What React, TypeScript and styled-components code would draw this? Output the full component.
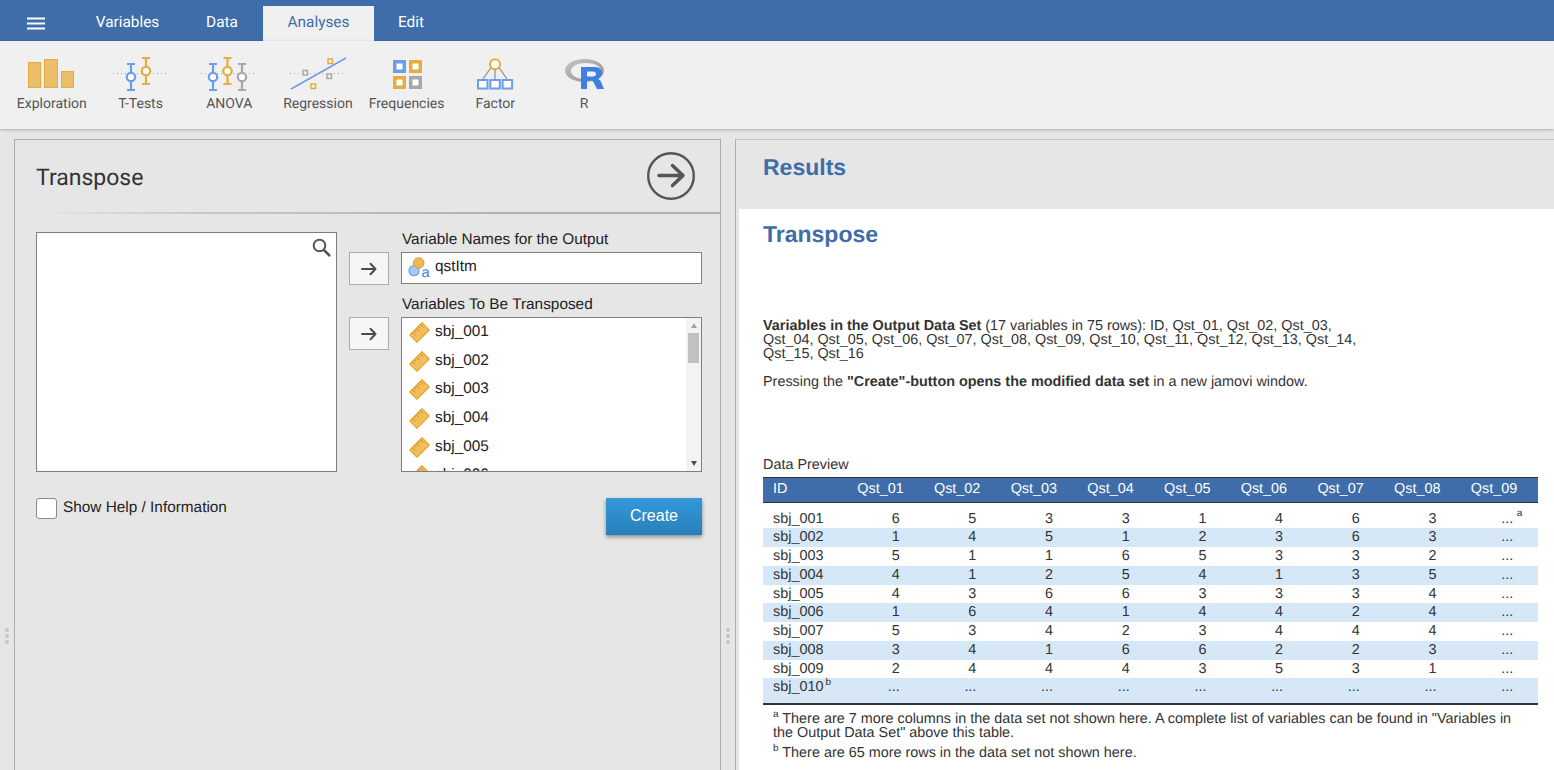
import React from "react";
import styled, { createGlobalStyle } from "styled-components";

const GlobalStyle = createGlobalStyle`
  html, body { margin: 0; padding: 0; height: 100%; overflow: hidden; background: #e6e6e6; }
  * { box-sizing: border-box; }
`;

const blue = "#3e6da9";
const iconBlue = "#6b9de8";
const iconOrange = "#e6ac40";
const iconGrey = "#a8a8a8";

// data
const tabs = ["Variables", "Data", "Analyses", "Edit"];
const variables = ["sbj_001", "sbj_002", "sbj_003", "sbj_004", "sbj_005", "sbj_006"];
const columns = ["Qst_01", "Qst_02", "Qst_03", "Qst_04", "Qst_05", "Qst_06", "Qst_07", "Qst_08", "Qst_09"];
const rows: [string, string][] = [
  ["sbj_001", "65331463"],
  ["sbj_002", "14512363"],
  ["sbj_003", "51165332"],
  ["sbj_004", "41254135"],
  ["sbj_005", "43663334"],
  ["sbj_006", "16414424"],
  ["sbj_007", "53423444"],
  ["sbj_008", "34166223"],
  ["sbj_009", "24443531"],
];

const Page = styled.div`
  height: 100vh;
  display: flex;
  flex-direction: column;
  overflow: hidden;
  background: #e6e6e6;
  font-family: "Liberation Sans", Arial, sans-serif;
  text-rendering: geometricPrecision;
`;

// top tabs
const TopBar = styled.div`
  height: 41px;
  flex: none;
  background: ${blue};
  display: flex;
  align-items: flex-end;
`;
const MenuButton = styled.div`
  width: 74px;
  height: 100%;
  padding: 5px 2px 0 0;
  display: flex;
  align-items: center;
  justify-content: center;
`;
const Tab = styled.div<{ $active?: boolean; $width: number }>`
  width: ${(p) => p.$width}px;
  height: 35px;
  display: flex;
  align-items: center;
  justify-content: center;
  padding-bottom: 3px;
  font: 15.36px Roboto, sans-serif;
  color: ${(p) => (p.$active ? blue : "#fff")};
  background: ${(p) => (p.$active ? "#f0f0f0" : "transparent")};
`;

// ribbon
const Ribbon = styled.div`
  height: 88px;
  flex: none;
  background: #f0f0f0;
  display: flex;
  padding-left: 7.5px;
  box-shadow: 0 1px 3px rgba(0, 0, 0, 0.25);
  position: relative;
  z-index: 1;
`;
const RibbonButton = styled.div`
  width: 88.7px;
  display: flex;
  flex-direction: column;
  align-items: center;
  padding-top: 15px;
`;
const RibbonIcon = styled.svg`
  width: 60px;
  height: 38px;
  display: block;
`;
const RibbonLabel = styled.div`
  margin-top: 2px;
  font: 14px Roboto, sans-serif;
  color: #555;
  white-space: nowrap;
`;

const Main = styled.div`
  flex: 1;
  min-height: 0;
  display: flex;
  padding: 10px 0 0 14px;
  position: relative;
`;

// options panel
const OptionsPanel = styled.section`
  width: 707px;
  flex: none;
  border: 1px solid #acacac;
  border-bottom: 0;
`;
const PanelHeader = styled.header`
  height: 74px;
  display: flex;
  align-items: center;
  justify-content: space-between;
  padding: 0 25px 0 21px;
  border-bottom: 2px solid #b4b4b4;
  border-image: linear-gradient(to right, #e6e6e6 3%, #c9c9c9 25%, #b0b0b0 70%) 1;
`;
const PanelTitle = styled.h1`
  margin: 0;
  padding-top: 2px;
  font: 400 23px Roboto, sans-serif;
  color: #333;
`;
const FormGrid = styled.div`
  display: grid;
  grid-template-columns: 301px 301px;
  column-gap: 64px;
  padding: 18px 18px 0 21px;
`;
const SupplierBox = styled.div`
  height: 240px;
  background: #fff;
  border: 1px solid #7f7f7f;
  display: flex;
  justify-content: flex-end;
  padding: 5px 5px 0 0;
`;
const TargetColumn = styled.div`
  display: flex;
  flex-direction: column;
  position: relative;
`;
const Label = styled.div`
  height: 20px;
  font-size: 15.36px;
  line-height: 16px;
  color: #222;
  padding-left: 1px;
`;
const TargetRow = styled.div`
  position: relative;
`;
const TransferButton = styled.div`
  position: absolute;
  left: -52px;
  top: 0;
  width: 40px;
  height: 33px;
  background: #f6f6f6;
  border: 1px solid #acacac;
  display: flex;
  align-items: center;
  justify-content: center;
`;
const SingleInput = styled.div`
  height: 32px;
  margin-bottom: 13px;
  background: #fff;
  border: 1px solid #7f7f7f;
  display: flex;
  align-items: center;
  padding: 0 0 2px 6px;
  gap: 5px;
  font-size: 15.36px;
  color: #222;
`;
const ListBox = styled.div`
  height: 155px;
  background: #fff;
  border: 1px solid #7f7f7f;
  display: flex;
  overflow: hidden;
`;
const ListItems = styled.div`
  flex: 1;
  min-width: 0;
  padding-left: 6.5px;
`;
const ListItem = styled.div`
  height: 28.7px;
  display: flex;
  align-items: center;
  gap: 5.5px;
  font-size: 15.36px;
  color: #222;
  padding-bottom: 1px;
`;
const FakeScrollbar = styled.div`
  width: 15px;
  flex: none;
  background: #f3f3f3;
  display: flex;
  flex-direction: column;
  align-items: center;
  padding-top: 5px;
`;
const ScrollThumb = styled.div`
  width: 11px;
  height: 30px;
  margin-top: 5px;
  background: #c1c1c1;
`;
const ScrollUp = styled.div`
  width: 0;
  height: 0;
  border: 3.5px solid transparent;
  border-top: 0;
  border-bottom: 5px solid #a3a3a3;
`;
const ScrollDown = styled.div`
  width: 0;
  height: 0;
  margin-top: auto;
  margin-bottom: 5px;
  border: 3.5px solid transparent;
  border-bottom: 0;
  border-top: 5px solid #505050;
`;
const FormFooter = styled.div`
  display: flex;
  justify-content: space-between;
  align-items: flex-start;
  padding: 26px 18px 0 21px;
`;
const CheckRow = styled.label`
  display: flex;
  align-items: flex-start;
  gap: 6px;
  font-size: 15.36px;
  line-height: 20px;
  color: #222;
`;
const CheckBox = styled.span`
  width: 21px;
  height: 21px;
  background: #fff;
  border: 1px solid #8b8b8b;
  border-radius: 3px;
`;
const CreateButton = styled.button`
  width: 96px;
  height: 37px;
  margin: 0;
  padding: 0 0 2px;
  border: 0;
  color: #fff;
  font: 16px "Liberation Sans", Arial, sans-serif;
  background: linear-gradient(#3498db, #2980b9);
  box-shadow: 0 2px 4px rgba(0, 0, 0, 0.4);
`;

const DragDots = styled.div<{ $left: number }>`
  position: absolute;
  left: ${(p) => p.$left}px;
  top: 499px;
  display: flex;
  flex-direction: column;
  gap: 2px;
  i {
    width: 4px;
    height: 4px;
    border-radius: 50%;
    background: #c4c4c4;
  }
`;

// results panel
const ResultsPanel = styled.section`
  flex: 1;
  min-width: 0;
  margin-left: 14px;
  border-left: 1px solid #acacac;
  border-top: 1px solid #c8c8c8;
  display: flex;
  flex-direction: column;
`;
const ResultsHeader = styled.div`
  height: 69px;
  flex: none;
  padding: 14px 0 0 27px;
  font-size: 23px;
  line-height: 27px;
  font-weight: 700;
  color: ${blue};
`;
const ResultsBody = styled.div`
  flex: 1;
  margin-left: 3px;
  background: #fff;
  padding: 12px 16px 0 24px;
  color: #333;
  font-size: 14.4px;
  overflow: hidden;
`;
const ResultTitle = styled.h2`
  margin: 0;
  font-size: 23px;
  line-height: 27px;
  font-weight: 700;
  color: ${blue};
`;
const Note = styled.p`
  margin: 0 0 14px;
  width: 600px;
  line-height: 14px;
  &:first-of-type {
    margin-top: 71px;
  }
`;
const TableCaption = styled.div`
  margin-top: 69px;
  height: 19px;
  line-height: 15px;
`;
const PreviewTable = styled.table`
  width: 775px;
  table-layout: fixed;
  border-collapse: collapse;
  border-bottom: 2px solid #333;
`;
const HeadCell = styled.th<{ $first?: boolean }>`
  height: 25px;
  padding: 0 ${(p) => (p.$first ? 0 : 21)}px 3px ${(p) => (p.$first ? 10 : 0)}px;
  width: ${(p) => (p.$first ? 85 : 76.7)}px;
  text-align: ${(p) => (p.$first ? "left" : "right")};
  font-weight: 400;
  color: #fff;
  background: ${blue};
  border-top: 1px solid #333;
  border-bottom: 1px solid #333;
`;
const SpacerRow = styled.tr`
  height: 7px;
`;
const BodyRow = styled.tr<{ $striped: boolean; $tall?: boolean }>`
  height: ${(p) => (p.$tall ? 26 : 18.75)}px;
  background: ${(p) => (p.$striped ? "#d6e8f7" : "#fff")};
`;
const Cell = styled.td<{ $first?: boolean }>`
  padding: 1px ${(p) => (p.$first ? 0 : 25)}px 0 ${(p) => (p.$first ? 10 : 0)}px;
  text-align: ${(p) => (p.$first ? "left" : "right")};
  vertical-align: top;
  line-height: 17px;
  position: relative;
  white-space: nowrap;
`;
const Mark = styled.sup`
  font-size: 10px;
  line-height: 0;
`;
const RowMark = styled(Mark)`
  margin-left: 2px;
`;
const CellMark = styled(Mark)`
  position: absolute;
  right: 16px;
  top: 4px;
`;
const Footnotes = styled.div`
  padding: 7px 20px 0 10px;
  line-height: 14px;
`;
const Footnote = styled.div`
  margin-bottom: 6px;
`;

// icons
const HamburgerIcon = () => (
  <svg width="18" height="13" viewBox="0 0 18 13">
    <path d="M0 1.5H18M0 6.5H18M0 11.5H18" stroke="#fff" strokeWidth="1.8" />
  </svg>
);

const Estimate = ({ x, y, color }: { x: number; y: number; color: string }) => (
  <g stroke={color} fill="none" strokeWidth="2.2">
    <path d={`M${x - 4} ${y - 13}h8M${x} ${y - 13}V${y + 13}M${x - 4} ${y + 13}h8`} />
    <circle cx={x} cy={y} r="4.2" fill="#fff" />
  </g>
);

const ExplorationIcon = () => (
  <RibbonIcon viewBox="0 0 60 38">
    <g fill="#ebbe6a" stroke={iconOrange} strokeWidth="1">
      <rect x="6.5" y="6.5" width="12" height="25" />
      <rect x="22.5" y="3.5" width="13" height="28" />
      <rect x="39.5" y="15.5" width="12" height="16" />
    </g>
  </RibbonIcon>
);
const DottedLine = ({ y }: { y: number }) => (
  <path d={`M2 ${y}H57`} stroke="#a9a9a9" strokeWidth="1" strokeDasharray="1 3" fill="none" />
);
const TTestIcon = () => (
  <RibbonIcon viewBox="0 0 60 38">
    <DottedLine y={17.5} />
    <Estimate x={20} y={21} color={iconBlue} />
    <Estimate x={35} y={15} color={iconOrange} />
  </RibbonIcon>
);
const AnovaIcon = () => (
  <RibbonIcon viewBox="0 0 60 38">
    <DottedLine y={17.5} />
    <Estimate x={14} y={21} color={iconBlue} />
    <Estimate x={28.5} y={15} color={iconOrange} />
    <Estimate x={43} y={21} color={iconGrey} />
  </RibbonIcon>
);
const RegressionIcon = () => (
  <RibbonIcon viewBox="0 0 60 38">
    <DottedLine y={17.5} />
    <path d="M3 33L58 2" stroke={iconBlue} strokeWidth="1.6" fill="none" />
    <g fill="#f0f0f0" strokeWidth="1.5">
      <rect x="15" y="14.5" width="4.5" height="4.5" stroke={iconGrey} />
      <rect x="39" y="18" width="4.5" height="4.5" stroke={iconGrey} />
      <rect x="40" y="3" width="4.5" height="4.5" stroke={iconOrange} />
      <rect x="23" y="28" width="4.5" height="4.5" stroke={iconOrange} />
    </g>
  </RibbonIcon>
);
const FreqBox = ({ x, y, color }: { x: number; y: number; color: string }) => (
  <rect x={x} y={y} width="9.5" height="9.5" fill="#fff" stroke={color} strokeWidth="3.5" />
);
const FrequenciesIcon = () => (
  <RibbonIcon viewBox="0 0 60 38">
    <FreqBox x={17.75} y={5.75} color={iconBlue} />
    <FreqBox x={33.75} y={5.75} color={iconOrange} />
    <FreqBox x={17.75} y={21.75} color={iconOrange} />
    <FreqBox x={33.75} y={21.75} color={iconGrey} />
  </RibbonIcon>
);
const FactorBox = ({ x }: { x: number }) => (
  <rect x={x} y="24" width="9.5" height="8.5" fill="#fff" stroke={iconBlue} strokeWidth="2" />
);
const FactorIcon = () => (
  <RibbonIcon viewBox="0 0 60 38">
    <path d="M30 13V23M26 11.5L18 23M34 11.5L42 23" stroke="#8a8a8a" strokeWidth="1.2" fill="none" />
    <circle cx="30" cy="8.3" r="5" fill="#fff" stroke={iconOrange} strokeWidth="2" />
    <FactorBox x={13} />
    <FactorBox x={25.3} />
    <FactorBox x={37.6} />
  </RibbonIcon>
);
const RLogoIcon = () => (
  <RibbonIcon viewBox="0 0 60 38">
    <defs>
      <linearGradient id="ring" x1="0" y1="0" x2="1" y2="1">
        <stop offset="0" stopColor="#c6c6c6" />
        <stop offset="1" stopColor="#8f8f8f" />
      </linearGradient>
    </defs>
    <path
      fillRule="evenodd"
      fill="url(#ring)"
      d="M30.5 3C19.5 3 11 8 11 14.5C11 21 19.5 26 30.5 26C41.5 26 50 21 50 14.5C50 8 41.5 3 30.5 3ZM32 7C23 7 17 10.5 17 15C17 19.5 23 23 32 23C41 23 47 19.5 47 15C47 10.5 41 7 32 7Z"
    />
    <path
      fillRule="evenodd"
      fill="#3f7fe0"
      d="M27 11H41C46 11 48 14 48 17C48 20 46 22 44 23C46 24 47 25 47.5 27L50 33H43L40 27C39 25 38 24.5 36 24.5H33V33H27ZM33 15.5V20.5H39C41 20.5 42 19.5 42 18C42 16.5 41 15.5 39 15.5Z"
    />
  </RibbonIcon>
);

const ArrowRight = () => (
  <svg width="16" height="14" viewBox="0 0 16 14">
    <path
      d="M1 7H14.5M9.5 1.7L14.5 7L9.5 12.3"
      fill="none"
      stroke="#4d4d4d"
      strokeWidth="2"
      strokeLinecap="round"
      strokeLinejoin="round"
    />
  </svg>
);
const CircleArrow = () => (
  <svg width="48" height="48" viewBox="0 0 48 48">
    <circle cx="24" cy="24" r="22.8" fill="none" stroke="#555" strokeWidth="2.4" />
    <path
      d="M12 23.5H35.5M25.5 13.5L36 23.5L25.5 33.5"
      fill="none"
      stroke="#555"
      strokeWidth="3.5"
      strokeLinecap="round"
      strokeLinejoin="round"
    />
  </svg>
);
const SearchIcon = () => (
  <svg width="19" height="19" viewBox="0 0 19 19">
    <circle cx="7.5" cy="7.5" r="5.8" fill="none" stroke="#555" strokeWidth="2" />
    <path d="M11.8 11.8L18 18" stroke="#555" strokeWidth="2.6" />
  </svg>
);
const RulerSvg = styled.svg`
  flex: none;
  margin-top: 1px;
`;
const RulerIcon = () => (
  <RulerSvg width="21" height="21" viewBox="0 0 21 21">
    <path d="M13 0.7L20.3 8L8 20.3L0.7 13Z" fill="#f2bd5c" stroke="#e3a024" strokeWidth="1.1" />
    <path
      d="M11.3 2.4l3 3M9.3 4.4l1.8 1.8M7.3 6.4l3 3M5.3 8.4l1.8 1.8M3.3 10.4l3 3"
      stroke="#c98a16"
      strokeWidth="1"
    />
  </RulerSvg>
);
const IdSvg = styled.svg`
  flex: none;
  overflow: visible;
`;
const IdVariableIcon = () => (
  <IdSvg width="22" height="22" viewBox="0 0 22 22">
    <circle cx="6" cy="14.7" r="5" fill="#a9c8f3" stroke={iconBlue} strokeWidth="1.2" />
    <circle cx="10.7" cy="7" r="5.3" fill="#eeb85a" stroke="#d99f36" strokeWidth="1" />
    <text x="13.5" y="20.5" fontFamily="Liberation Sans" fontSize="14.5" fill="#3f7fe0">
      a
    </text>
  </IdSvg>
);

const ribbonItems = [
  { label: "Exploration", icon: <ExplorationIcon /> },
  { label: "T-Tests", icon: <TTestIcon /> },
  { label: "ANOVA", icon: <AnovaIcon /> },
  { label: "Regression", icon: <RegressionIcon /> },
  { label: "Frequencies", icon: <FrequenciesIcon /> },
  { label: "Factor", icon: <FactorIcon /> },
  { label: "R", icon: <RLogoIcon /> },
];
const tabWidths = [107, 82, 111, 74];

const Dots = ({ left }: { left: number }) => (
  <DragDots $left={left}>
    <i />
    <i />
    <i />
  </DragDots>
);

export default function App() {
  return (
    <Page>
      <GlobalStyle />
      <TopBar>
        <MenuButton>
          <HamburgerIcon />
        </MenuButton>
        {tabs.map((t, i) => (
          <Tab key={t} $active={t === "Analyses"} $width={tabWidths[i]}>
            {t}
          </Tab>
        ))}
      </TopBar>
      <Ribbon>
        {ribbonItems.map((item) => (
          <RibbonButton key={item.label}>
            {item.icon}
            <RibbonLabel>{item.label}</RibbonLabel>
          </RibbonButton>
        ))}
      </Ribbon>
      <Main>
        <OptionsPanel>
          <PanelHeader>
            <PanelTitle>Transpose</PanelTitle>
            <CircleArrow />
          </PanelHeader>
          <FormGrid>
            <SupplierBox>
              <SearchIcon />
            </SupplierBox>
            <TargetColumn>
              <Label>Variable Names for the Output</Label>
              <TargetRow>
                <TransferButton>
                  <ArrowRight />
                </TransferButton>
                <SingleInput>
                  <IdVariableIcon />
                  qstItm
                </SingleInput>
              </TargetRow>
              <Label>Variables To Be Transposed</Label>
              <TargetRow>
                <TransferButton>
                  <ArrowRight />
                </TransferButton>
                <ListBox>
                  <ListItems>
                    {variables.map((v) => (
                      <ListItem key={v}>
                        <RulerIcon />
                        {v}
                      </ListItem>
                    ))}
                  </ListItems>
                  <FakeScrollbar>
                    <ScrollUp />
                    <ScrollThumb />
                    <ScrollDown />
                  </FakeScrollbar>
                </ListBox>
              </TargetRow>
            </TargetColumn>
          </FormGrid>
          <FormFooter>
            <CheckRow>
              <CheckBox />
              Show Help / Information
            </CheckRow>
            <CreateButton>Create</CreateButton>
          </FormFooter>
        </OptionsPanel>
        <ResultsPanel>
          <ResultsHeader>Results</ResultsHeader>
          <ResultsBody>
            <ResultTitle>Transpose</ResultTitle>
            <Note>
              <b>Variables in the Output Data Set</b> (17 variables in 75 rows): ID, Qst_01, Qst_02, Qst_03,
              Qst_04, Qst_05, Qst_06, Qst_07, Qst_08, Qst_09, Qst_10, Qst_11, Qst_12, Qst_13, Qst_14, Qst_15,
              Qst_16
            </Note>
            <Note>
              Pressing the <b>"Create"-button opens the modified data set</b> in a new jamovi window.
            </Note>
            <TableCaption>Data Preview</TableCaption>
            <PreviewTable>
              <thead>
                <tr>
                  <HeadCell $first>ID</HeadCell>
                  {columns.map((c) => (
                    <HeadCell key={c}>{c}</HeadCell>
                  ))}
                </tr>
              </thead>
              <tbody>
                <SpacerRow />
                {rows.map(([id, values], i) => (
                  <BodyRow key={id} $striped={i % 2 === 1}>
                    <Cell $first>{id}</Cell>
                    {values.split("").map((v, j) => (
                      <Cell key={j}>{v}</Cell>
                    ))}
                    <Cell>
                      ...
                      {i === 0 && <CellMark>a</CellMark>}
                    </Cell>
                  </BodyRow>
                ))}
                <BodyRow $striped $tall>
                  <Cell $first>
                    sbj_010<RowMark>b</RowMark>
                  </Cell>
                  {columns.map((c) => (
                    <Cell key={c}>...</Cell>
                  ))}
                </BodyRow>
              </tbody>
            </PreviewTable>
            <Footnotes>
              <Footnote>
                <Mark>a</Mark> There are 7 more columns in the data set not shown here. A complete list of
                variables can be found in "Variables in the Output Data Set" above this table.
              </Footnote>
              <Footnote>
                <Mark>b</Mark> There are 65 more rows in the data set not shown here.
              </Footnote>
            </Footnotes>
          </ResultsBody>
        </ResultsPanel>
        <Dots left={5} />
        <Dots left={726} />
      </Main>
    </Page>
  );
}
